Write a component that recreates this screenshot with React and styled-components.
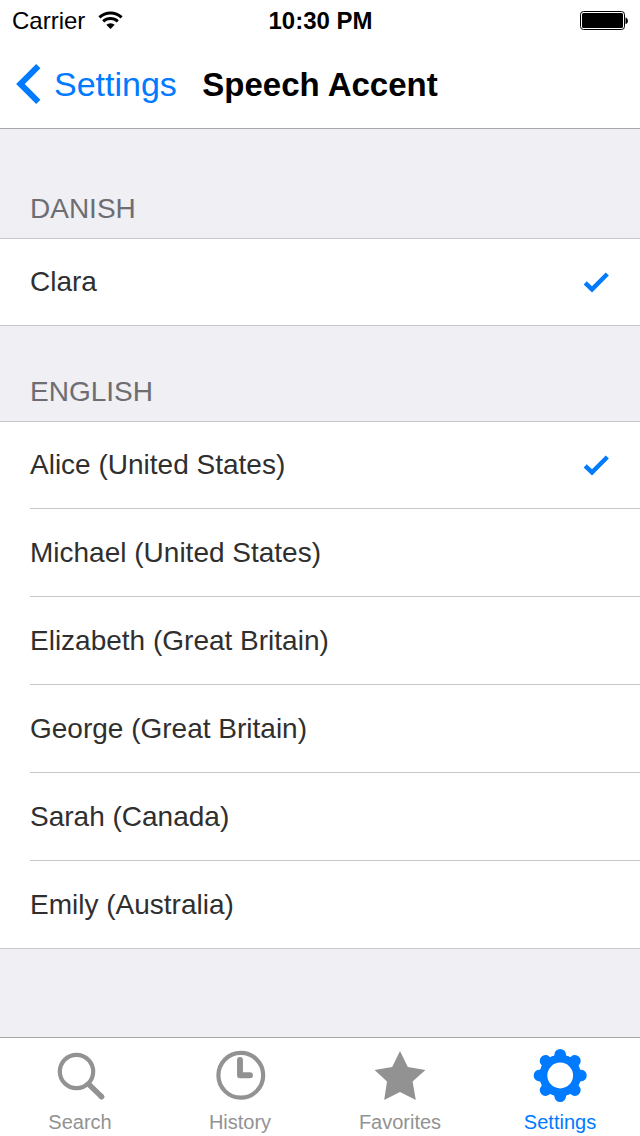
import React, { useState } from 'react';
import styled, { createGlobalStyle } from 'styled-components';

const GlobalStyle = createGlobalStyle`
  * {
    box-sizing: border-box;
  }

  body {
    margin: 0;
    background: #efeff4;
    color: #2f2f2f;
    font-family: "Liberation Sans", Arial, sans-serif;
    font-size: 28px;
  }
`;

const Screen = styled.div`
  display: flex;
  flex-direction: column;
  min-height: 100vh;
`;

const Header = styled.header`
  background: #fff;
  color: #000;
  border-bottom: 1px solid #a7a7aa;
`;

const StatusBar = styled.div`
  display: grid;
  grid-template-columns: 1fr auto 1fr;
  align-items: center;
  height: 40px;
  padding: 2px 11px 0 12px;
  font-size: 24px;
  line-height: 38px;
`;

const Carrier = styled.div`
  display: flex;
  align-items: center;
  gap: 13px;
`;

const Clock = styled.time`
  font-weight: bold;
`;

const Battery = styled.svg`
  justify-self: end;
`;

const NavBar = styled.nav`
  display: grid;
  grid-template-columns: 1fr auto 1fr;
  align-items: center;
  height: 88px;
  padding: 0 16px;
`;

const BackButton = styled.button`
  display: flex;
  align-items: center;
  justify-self: start;
  gap: 12px;
  padding: 0;
  border: 0;
  background: none;
  color: #007aff;
  font: inherit;
  font-size: 34px;
  line-height: 40px;
  cursor: pointer;
`;

const Title = styled.h1`
  margin: 0;
  padding-top: 2px;
  font-size: 33px;
  line-height: 40px;
`;

const Content = styled.main`
  flex: 1;
`;

const Group = styled.fieldset`
  min-width: 0;
  margin: 0;
  padding: 0;
  border: 0;
`;

const GroupTitle = styled.legend`
  width: 100%;
  padding: ${props => (props.$first ? '64px' : '50px')} 30px 13px;
  color: #6d6d72;
  line-height: 32px;
  text-transform: uppercase;
`;

const Rows = styled.div`
  background: #fff;
  border: solid #c8c7cc;
  border-width: 1px 0;
`;

const Row = styled.label`
  display: flex;
  align-items: center;
  justify-content: space-between;
  height: 88px;
  margin-left: 30px;
  padding-right: 30px;
  border-bottom: 1px solid #c8c7cc;
  cursor: pointer;

  &:first-child {
    height: 87px;
  }

  &:last-child {
    border-bottom: 0;
    height: 87px;
  }

  &:only-child {
    height: 86px;
  }
`;

const Radio = styled.input`
  appearance: none;
  width: 0;
  height: 0;
  margin: 0;
`;

const RowText = styled.span`
  flex: 1;
  line-height: 32px;
`;

const TabBar = styled.nav`
  display: grid;
  grid-template-columns: repeat(4, 1fr);
  background: #fff;
  border-top: 1px solid #a9a9ac;
`;

const Tab = styled.a`
  display: flex;
  flex-direction: column;
  align-items: center;
  gap: 6px;
  padding: 10px 0 2px;
  color: ${props => (props.$active ? '#007aff' : '#929292')};
  font-size: 20px;
  line-height: 24px;
  text-decoration: none;
`;

const groups = [
  { language: 'Danish', voices: ['Clara'] },
  {
    language: 'English',
    voices: [
      'Alice (United States)',
      'Michael (United States)',
      'Elizabeth (Great Britain)',
      'George (Great Britain)',
      'Sarah (Canada)',
      'Emily (Australia)'
    ]
  }
];

const WifiIcon = () => (
  <svg width="26" height="20" viewBox="0 0 26 20" aria-hidden="true">
    <g fill="none" stroke="#000" strokeWidth="3">
      <path d="M1.4 6.3a16.4 16.4 0 0 1 22.2 0" />
      <path d="M5.2 10.4a10.8 10.8 0 0 1 14.6 0" />
    </g>
    <path d="M8.3 13.8a6.2 6.2 0 0 1 8.4 0L12.5 18z" />
  </svg>
);

const Chevron = () => (
  <svg width="26" height="40" viewBox="0 0 26 40" aria-hidden="true">
    <path d="M22.3 2.2L4.4 20l17.9 17.8" fill="none" stroke="#007aff" strokeWidth="6" />
  </svg>
);

const Checkmark = () => (
  <svg width="28" height="22" viewBox="0 0 28 22" aria-hidden="true">
    <path d="M3.2 11.8l6.8 6.6L25.3 3" fill="none" stroke="#007aff" strokeWidth="4.4" />
  </svg>
);

const SearchIcon = () => (
  <g fill="none" stroke="currentColor">
    <circle cx="24.5" cy="23.5" r="16.7" strokeWidth="4.2" />
    <path d="M36.5 36l13 12.6" strokeWidth="5.4" />
    <path d="M48.8 48l.9.8" strokeWidth="5.4" strokeLinecap="round" />
  </g>
);

const HistoryIcon = () => (
  <g fill="none" stroke="currentColor">
    <circle cx="28.8" cy="27.3" r="22.4" strokeWidth="4.2" />
    <path d="M28 12v15.3h10" strokeWidth="5.9" strokeLinecap="round" strokeLinejoin="round" />
  </g>
);

const StarIcon = () => (
  <path
    d="M28 3l7.8 16 17.6 3-12.8 11.6L43.8 52 28 44 12.2 52l2.8-18.4L2.6 22l17.6-3z"
    fill="currentColor"
  />
);

const GearIcon = () => (
  <g fill="currentColor">
    <circle cx="28.2" cy="27.5" r="16.8" fill="none" stroke="currentColor" strokeWidth="7.8" />
    {[0, 45, 90, 135, 180, 225, 270, 315].map(angle => (
      <path
        key={angle}
        d="M19.6 8.6q2.9-.2 2.9-2.4a5.7 5.2 0 0 1 11.4 0q0 2.2 2.9 2.4l-3 5.4H22.6z"
        transform={`rotate(${angle} 28.2 27.5)`}
      />
    ))}
  </g>
);

const tabs = [
  { name: 'Search', Icon: SearchIcon },
  { name: 'History', Icon: HistoryIcon },
  { name: 'Favorites', Icon: StarIcon },
  { name: 'Settings', Icon: GearIcon, active: true }
];

export default function App() {
  const [selected, setSelected] = useState({
    Danish: 'Clara',
    English: 'Alice (United States)'
  });

  return (
    <Screen>
      <GlobalStyle />
      <Header>
        <StatusBar>
          <Carrier>
            Carrier
            <WifiIcon />
          </Carrier>
          <Clock>10:30 PM</Clock>
          <Battery width="50" height="20" viewBox="0 0 50 20" aria-hidden="true">
            <rect x="1.5" y=".5" width="44" height="18" rx="3" fill="none" stroke="#000" />
            <rect x="3" y="2" width="41" height="15" rx="1.5" />
            <path d="M46.5 6.5c3.2.6 3.2 6 0 6.6z" />
          </Battery>
        </StatusBar>
        <NavBar>
          <BackButton type="button">
            <Chevron />
            Settings
          </BackButton>
          <Title>Speech Accent</Title>
        </NavBar>
      </Header>

      <Content>
        {groups.map(({ language, voices }, index) => (
          <Group key={language}>
            <GroupTitle $first={index === 0}>{language}</GroupTitle>
            <Rows>
              {voices.map(voice => (
                <Row key={voice}>
                  <Radio
                    type="radio"
                    name={language}
                    checked={selected[language] === voice}
                    onChange={() => setSelected({ ...selected, [language]: voice })}
                  />
                  <RowText>{voice}</RowText>
                  {selected[language] === voice && <Checkmark />}
                </Row>
              ))}
            </Rows>
          </Group>
        ))}
      </Content>

      <TabBar>
        {tabs.map(({ name, Icon, active }) => (
          <Tab key={name} href={`#${name.toLowerCase()}`} $active={active}>
            <svg width="56" height="56" viewBox="0 0 56 56" aria-hidden="true">
              <Icon />
            </svg>
            {name}
          </Tab>
        ))}
      </TabBar>
    </Screen>
  );
}
